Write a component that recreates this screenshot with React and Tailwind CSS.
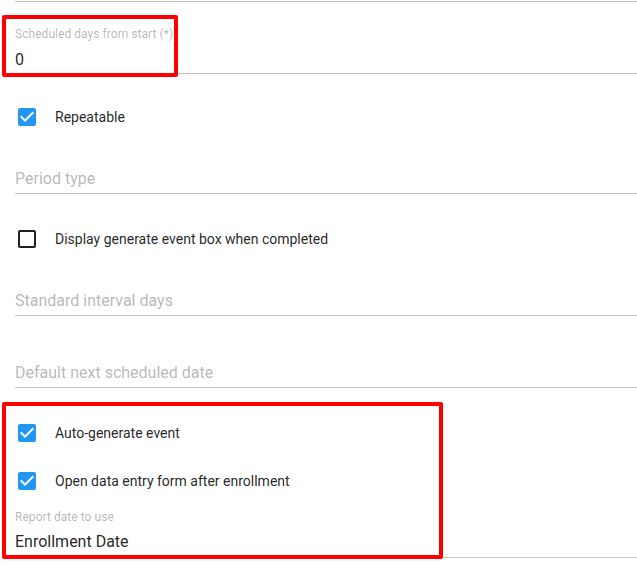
import React from 'react';

const CHECKED = 'M19 3H5c-1.11 0-2 .9-2 2v14c0 1.1.89 2 2 2h14c1.11 0 2-.9 2-2V5c0-1.1-.89-2-2-2zm-9 14l-5-5 1.41-1.41L10 14.17l7.59-7.59L19 8l-9 9z';
const UNCHECKED = 'M19 5v14H5V5h14m0-2H5c-1.1 0-2 .9-2 2v14c0 1.1.9 2 2 2h14c1.1 0 2-.9 2-2V5c0-1.1-.9-2-2-2z';

function Checkbox({ label, checked, className = '' }) {
  return (
    <div className={`flex items-center h-[48px] ${className}`}>
      <svg width="24" height="24" viewBox="0 0 24 24" className="shrink-0">
        <path d={checked ? CHECKED : UNCHECKED} fill={checked ? '#2196f3' : 'rgba(0,0,0,0.87)'} />
      </svg>
      <span className="ml-4 text-[14px] text-[rgba(0,0,0,0.87)]">{label}</span>
    </div>
  );
}

function EmptyField({ hint, pt, pb }) {
  return (
    <div className={`border-b border-[#c4c4c4] ${pt} ${pb}`}>
      <div className="text-[16px] leading-[24px] text-[rgba(0,0,0,0.3)]">{hint}</div>
    </div>
  );
}

export default function App() {
  return (
    <div className="relative w-[637px] h-[565px] bg-white overflow-hidden font-['Roboto',sans-serif]">
      <div className="pl-[15px]">
        <div className="mt-[1px] h-px bg-[#c4c4c4]" />

        {/* Scheduled days */}
        <div className="border-b border-[#c4c4c4] pt-[25px] pb-[1px]">
          <div className="text-[12px] leading-[15px] tracking-[0.05px] text-[rgba(0,0,0,0.3)]">Scheduled days from start (*)</div>
          <div className="mt-[6px] text-[16px] leading-[24px] text-[rgba(0,0,0,0.87)]">0</div>
        </div>

        <Checkbox label="Repeatable" checked className="mt-[19px]" />

        <EmptyField hint="Period type" pt="pt-[26px]" pb="pb-[2px]" />

        <Checkbox label="Display generate event box when completed" className="mt-[21px]" />

        <EmptyField hint="Standard interval days" pt="pt-[26px]" pb="pb-[2px]" />
        <EmptyField hint="Default next scheduled date" pt="pt-[45px]" pb="pb-[2px]" />

        <Checkbox label="Auto-generate event" checked className="mt-[21px]" />
        <Checkbox label="Open data entry form after enrollment" checked />

        {/* Report date */}
        <div className="border-b border-[#c4c4c4] pt-[5px] pb-[3px]">
          <div className="text-[12px] leading-[15px] tracking-[0.05px] text-[rgba(0,0,0,0.3)]">Report date to use</div>
          <div className="mt-[5px] text-[16px] leading-[24px] text-[rgba(0,0,0,0.87)]">Enrollment Date</div>
        </div>
      </div>

      {/* annotation boxes */}
      <div className="absolute left-[2px] top-[15px] w-[176px] h-[62px] border-4 border-[#ff0000] rounded-[2px]" />
      <div className="absolute left-[2px] top-[402px] w-[441px] h-[157px] border-4 border-[#ff0000] rounded-[2px]" />
    </div>
  );
}
